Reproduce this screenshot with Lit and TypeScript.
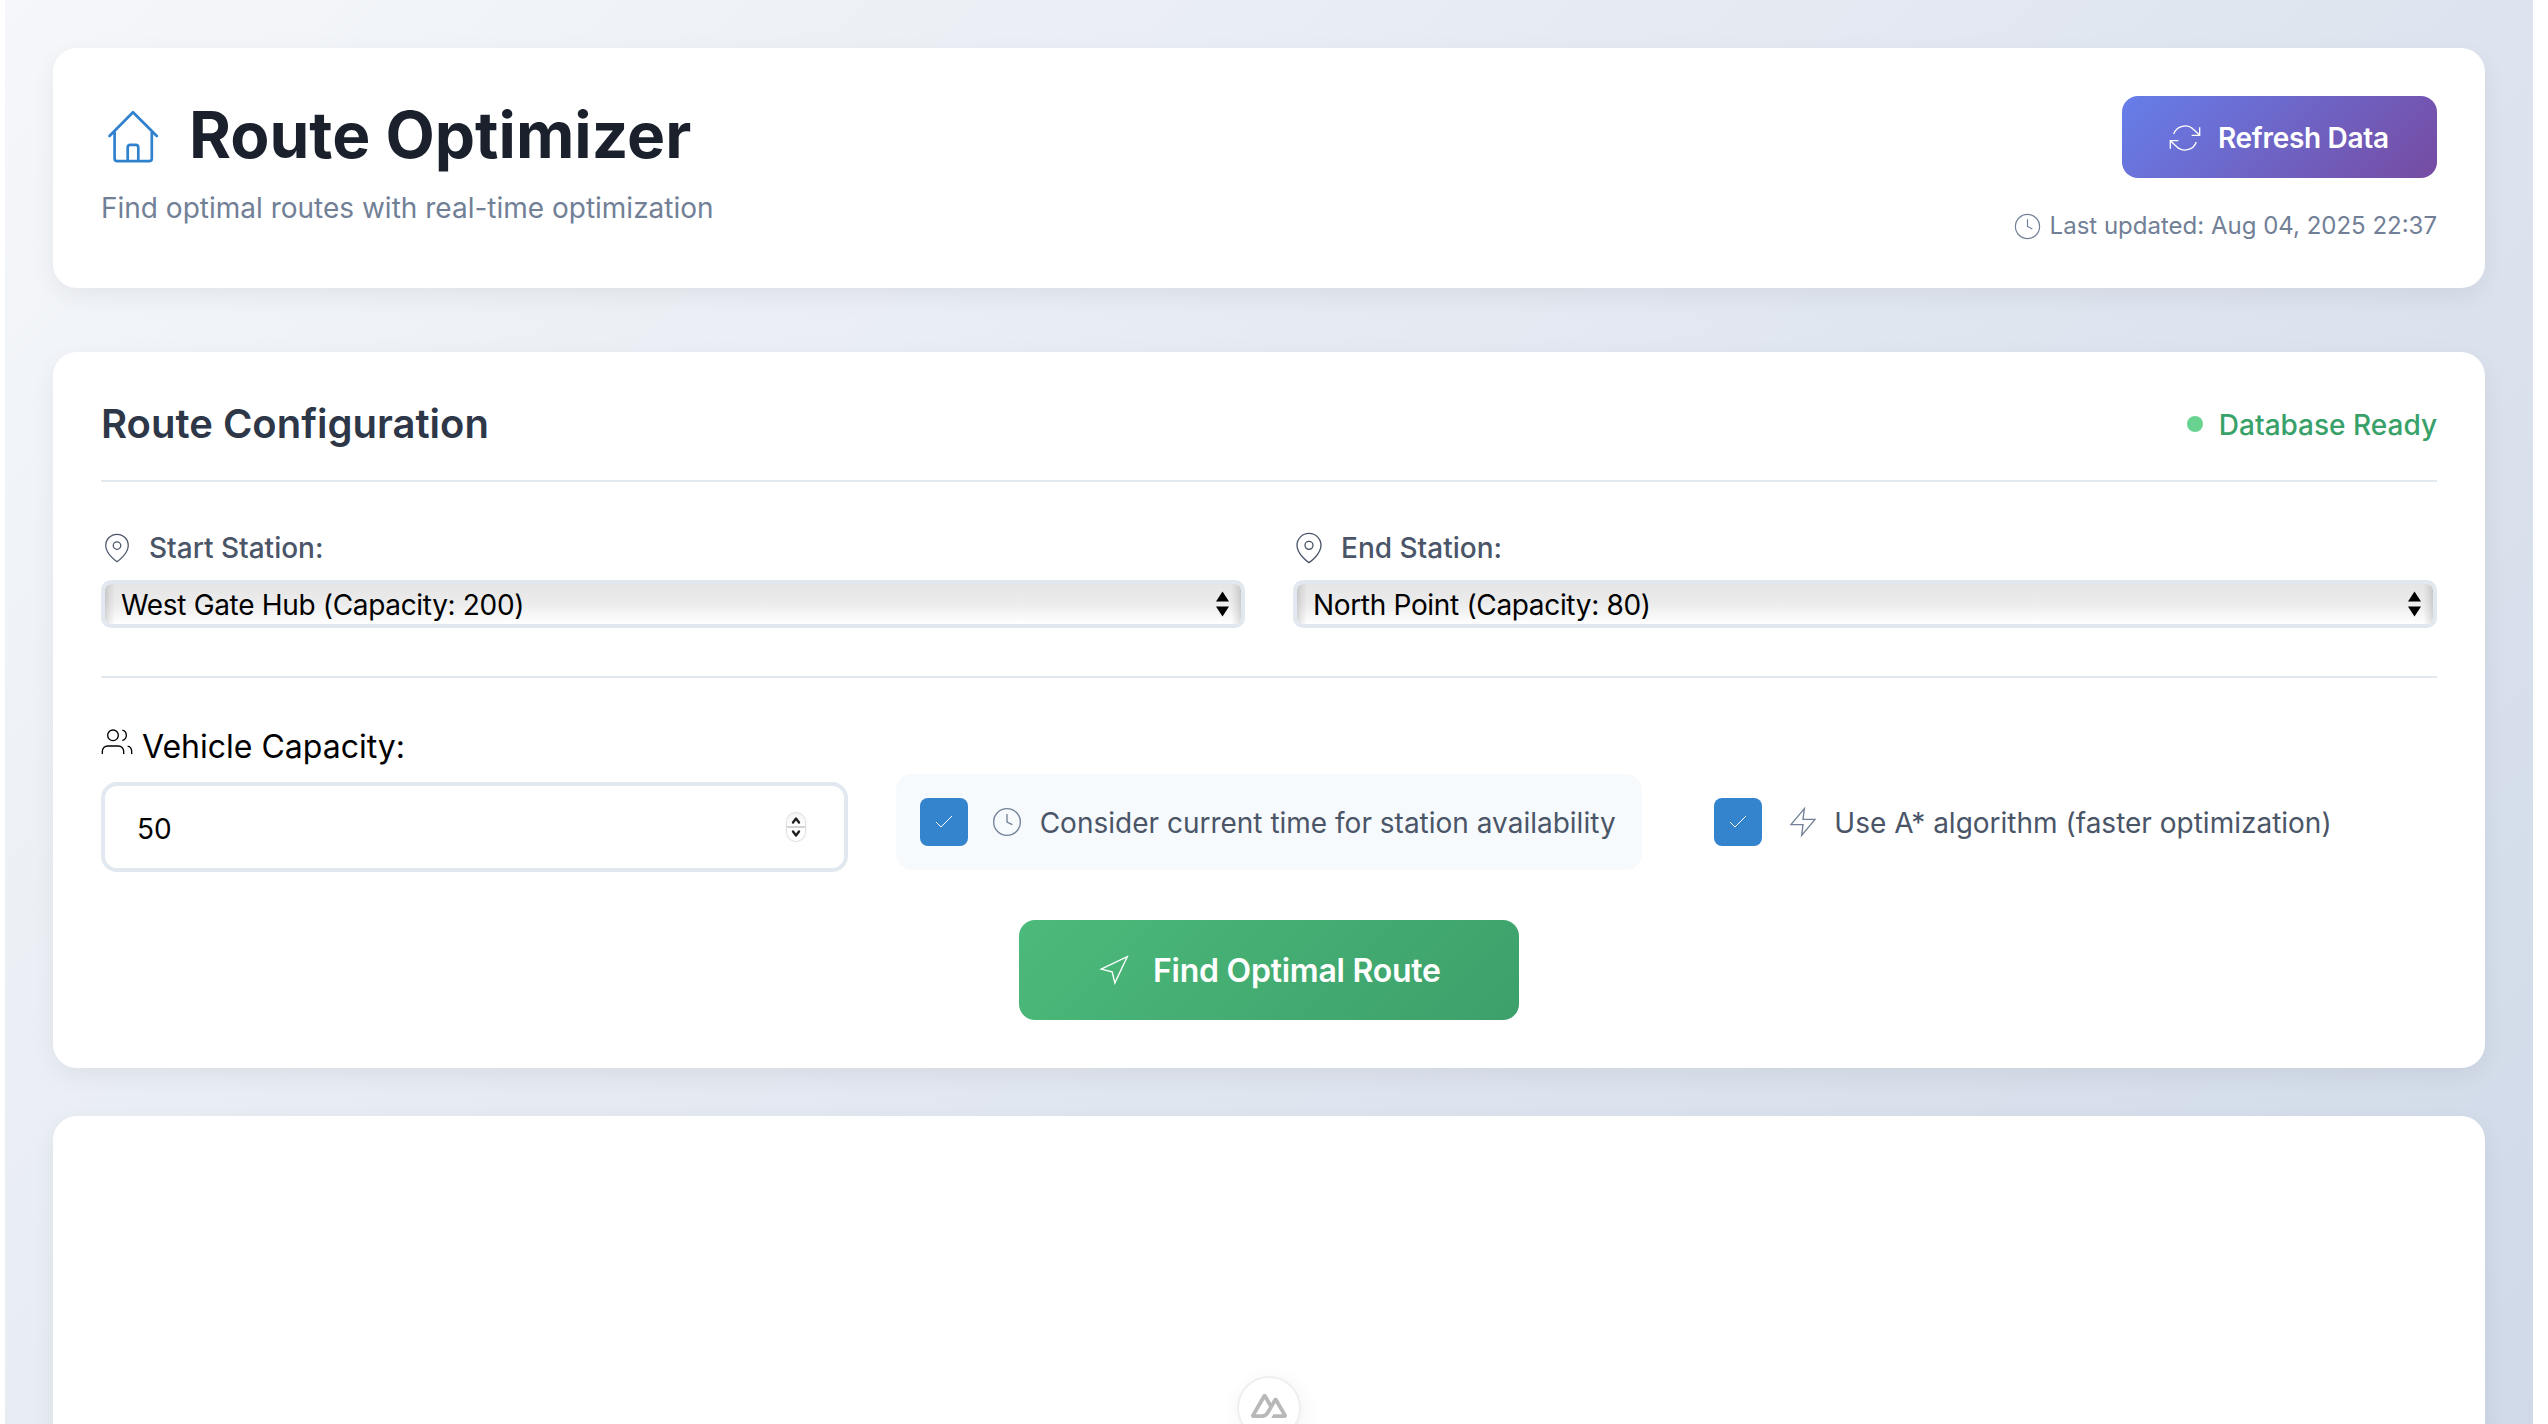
import { LitElement, html, css, svg } from "lit";
import { customElement, property } from "lit/decorators.js";

const ICONS: Record<string, unknown> = {
  clock: svg`<circle cx="12" cy="12" r="10"/><polyline points="12 6 12 12 16 14"/>`,
  refresh: svg`<polyline points="23 4 23 10 17 10"/><polyline points="1 20 1 14 7 14"/><path d="M3.51 9a9 9 0 0 1 14.85-3.36L23 10M1 14l4.64 4.36A9 9 0 0 0 20.49 15"/>`,
  pin: svg`<path d="M21 10c0 7-9 13-9 13s-9-6-9-13a9 9 0 0 1 18 0z"/><circle cx="12" cy="10" r="3"/>`,
  users: svg`<path d="M17 21v-2a4 4 0 0 0-4-4H5a4 4 0 0 0-4 4v2"/><circle cx="9" cy="7" r="4"/><path d="M23 21v-2a4 4 0 0 0-3-3.87"/><path d="M16 3.13a4 4 0 0 1 0 7.75"/>`,
  check: svg`<polyline points="20 6 9 17 4 12"/>`,
  zap: svg`<polygon points="13 2 3 14 12 14 11 22 21 10 12 10 13 2"/>`,
  navigation: svg`<polygon points="3 11 22 2 13 21 11 13 3 11"/>`,
};

@customElement("line-icon")
export class LineIcon extends LitElement {
  @property() name = "clock";

  static styles = css`
    :host { display: block; flex: none; }
    .glyph { display: block; width: 100%; height: 100%; fill: none; stroke: currentColor; stroke-width: 1; overflow: visible; }
  `;

  render() {
    return html`<svg class="glyph" viewBox="0 0 24 24">${ICONS[this.name]}</svg>`;
  }
}

@customElement("station-select")
export class StationSelect extends LitElement {
  @property() label = "";
  @property() value = "";
  @property({ type: Boolean, reflect: true }) compact = false;

  static styles = css`
    :host { display: block; min-width: 0; }
    .label { display: flex; align-items: center; gap: 16px; height: 36px; margin-bottom: 14px; color: #4a5568; font-weight: 500; }
    .pin { width: 32px; height: 32px; }
    :host([compact]) .pin { width: 30px; height: 30px; margin: 0 1px; }
    .select {
      box-sizing: border-box; height: 48px; border: 4px solid #e2e8f0; border-radius: 10px;
      padding: 0 12px 0 16px; display: flex; align-items: center; justify-content: space-between; color: #000;
      letter-spacing: -0.33px;
      background:
        linear-gradient(to right, rgba(0,0,0,.14), rgba(0,0,0,.07) 4px, rgba(0,0,0,0) 10px),
        linear-gradient(to left, rgba(0,0,0,.14), rgba(0,0,0,.07) 4px, rgba(0,0,0,0) 10px),
        linear-gradient(#e5e5e5, #ececec 50%, #fff);
      background-clip: padding-box; background-origin: padding-box;
    }
    .select .text { padding-top: 1px; }
    .arrows { width: 13px; height: 26px; fill: #000; }
  `;

  render() {
    return html`
      <div class="label"><line-icon class="pin" name="pin"></line-icon><span class="text">${this.label}</span></div>
      <div class="select">
        <span class="text">${this.value}</span>
        <svg class="arrows" viewBox="0 0 13 26"><path d="M0 10.5 6.5 .5 13 10.5zM0 15.5 6.5 25.5 13 15.5z"/></svg>
      </div>`;
  }
}

@customElement("option-toggle")
export class OptionToggle extends LitElement {
  @property() icon = "clock";
  @property() label = "";

  static styles = css`
    :host { display: flex; align-items: center; box-sizing: border-box; height: 96px; padding: 0 24px; border-radius: 16px; color: #4a5568; white-space: nowrap; }
    :host([active]) { background: #f7fafc; }
    .box { display: flex; align-items: center; justify-content: center; width: 48px; height: 48px; border-radius: 8px; background: #3483cd; color: #fff; margin-right: 23px; flex: none; }
    .check { width: 24px; height: 24px; }
    .icon { width: 32px; height: 32px; color: #718096; margin-right: 17px; }
    .icon.zap { margin: 0 15px 0 2px; }
    .text { padding-top: 2px; }
  `;

  render() {
    return html`
      <span class="box"><line-icon class="check" name="check"></line-icon></span>
      <line-icon class="icon ${this.icon}" name=${this.icon}></line-icon>
      <span class="text">${this.label}</span>`;
  }
}

@customElement("app-root")
export class AppRoot extends LitElement {
  static styles = css`
    :host { display: block; background: #fff; font-family: Inter, "Liberation Sans", sans-serif; font-size: 28px; line-height: 36px; }
    .page {
      box-sizing: border-box; height: 1424px; overflow: hidden; margin: 0 15px 0 5px; padding: 48px;
      background: linear-gradient(135deg, #f5f7fa 0%, #c3cfe2 100%) 0 0 / 2528px 2800px no-repeat;
      position: relative;
    }
    .card {
      box-sizing: border-box; background: #fff; border-radius: 24px; padding: 48px;
      box-shadow: 0 8px 24px rgba(0,0,0,.06);
    }
    .header { height: 240px; margin-bottom: 64px; display: flex; justify-content: space-between; }
    .brand { display: flex; align-items: center; gap: 24px; height: 77px; margin-bottom: 16px; }
    .house { width: 64px; height: 64px; fill: none; stroke: #3182ce; stroke-width: 2.7; stroke-linecap: round; stroke-linejoin: round; margin-top: 4px; }
    .title { margin: 0; font-size: 64px; line-height: 77px; font-weight: 700; color: #1a202c; }
    .subtitle { margin: 0; line-height: 38px; color: #718096; }
    .side { display: flex; flex-direction: column; align-items: flex-end; gap: 30px; }
    .refresh {
      box-sizing: border-box; flex: none; height: 82px; width: 315px; padding: 0 0 0 47px; border-radius: 16px; display: flex; align-items: center; gap: 17px;
      background: linear-gradient(135deg, #667eea 0%, #764ba2 100%); color: #fff; font-weight: 600; letter-spacing: -0.3px;
    }
    .refresh .text, .find .text { padding-top: 2px; }
    .refresh-icon { width: 32px; height: 32px; margin-top: 2px; }
    .updated { display: flex; flex: none; align-items: center; gap: 8px; height: 36px; font-size: 24px; color: #718096; }
    .updated-icon { width: 29px; height: 29px; }
    .config { height: 716px; margin-bottom: 48px; }
    .config-head { display: flex; align-items: center; justify-content: space-between; height: 48px; padding-bottom: 32px; border-bottom: 2px solid #e2e8f0; }
    .config-title { margin: 0; font-size: 40px; line-height: 48px; font-weight: 600; color: #2d3748; }
    .status { display: flex; align-items: center; gap: 16px; color: #38a169; font-weight: 500; }
    .status .text { padding-top: 2px; }
    .dot { width: 16px; height: 16px; border-radius: 50%; background: #68d391; }
    .stations { display: grid; grid-template-columns: 1fr 1fr; gap: 48px; padding: 48px 0; border-bottom: 2px solid #e2e8f0; }
    .options { display: grid; grid-template-columns: repeat(3, minmax(0, 1fr)); gap: 48px; align-items: end; padding-top: 48px; }
    .toggle { margin-bottom: 2px; }
    .capacity-label { display: flex; align-items: center; gap: 9px; height: 40px; margin-bottom: 16px; font-size: 32px; color: #000; }
    .capacity-label .text { padding-top: 2px; }
    .number .text { padding-top: 3px; }
    .users { width: 32px; height: 32px; margin-top: -9px; }
    .number { box-sizing: border-box; height: 90px; border: 4px solid #e2e8f0; border-radius: 16px; padding: 0 39px 0 32px; display: flex; align-items: center; justify-content: space-between; color: #000; }
    .spinner { width: 18px; height: 28px; border-radius: 9px; background: linear-gradient(#f4f4f4, #fff 45%, #d4d4d4 46%, #d4d4d4 53%, #fff 54%); box-shadow: 0 0 2px rgba(0,0,0,.45); fill: none; stroke: #222; stroke-width: 2.4; stroke-linecap: round; stroke-linejoin: round; }
    .actions { display: flex; justify-content: center; margin-top: 48px; }
    .find { box-sizing: border-box; width: 500px; height: 100px; padding: 0 0 0 78px; border-radius: 16px; display: flex; align-items: center; gap: 23px; background: linear-gradient(135deg, #4cba7a 0%, #3ca06a 100%); color: #fff; font-size: 32px; font-weight: 600; letter-spacing: -0.24px; }
    .find-icon { width: 33px; height: 33px; }
    .results { height: 600px; }
    .badge {
      position: absolute; left: 1232px; top: 1376px; box-sizing: border-box; width: 64px; height: 64px; border: 2px solid #efefef; border-radius: 32px;
      background: #fff; box-shadow: 2px 4px 20px rgba(0,0,0,.06); display: flex; justify-content: center; padding-top: 16px;
    }
    .nuxt { width: 36px; height: 24px; fill: #b8b8b8; }
  `;

  render() {
    return html`
      <main class="page">
        <header class="card header">
          <div>
            <div class="brand">
              <svg class="house" viewBox="0 0 64 64">
                <path d="M8.5 31 32 7.2 55.8 31M13.6 27v26.5a2.6 2.6 0 0 0 2.6 2.6h32a2.6 2.6 0 0 0 2.6-2.6V27M26.7 56V42.4a2.6 2.6 0 0 1 2.6-2.6h5.4a2.6 2.6 0 0 1 2.6 2.6V56"/>
              </svg>
              <h1 class="title">Route Optimizer</h1>
            </div>
            <p class="subtitle">Find optimal routes with real-time optimization</p>
          </div>
          <div class="side">
            <div class="refresh"><line-icon class="refresh-icon" name="refresh"></line-icon><span class="text">Refresh Data</span></div>
            <div class="updated"><line-icon class="updated-icon" name="clock"></line-icon><span class="text">Last updated: Aug 04, 2025 22:37</span></div>
          </div>
        </header>

        <section class="card config">
          <div class="config-head">
            <h2 class="config-title">Route Configuration</h2>
            <div class="status"><i class="dot"></i><span class="text">Database Ready</span></div>
          </div>
          <div class="stations">
            <station-select compact label="Start Station:" value="West Gate Hub (Capacity: 200)"></station-select>
            <station-select label="End Station:" value="North Point (Capacity: 80)"></station-select>
          </div>
          <div class="options">
            <div>
              <div class="capacity-label"><line-icon class="users" name="users"></line-icon><span class="text">Vehicle Capacity:</span></div>
              <div class="number">
                <span class="text">50</span>
                <svg class="spinner" viewBox="0 0 18 28"><path d="M6 9.500 9 5.500l3 4M6 18.500l3 4 3-4"/></svg>
              </div>
            </div>
            <option-toggle class="toggle" active icon="clock" label="Consider current time for station availability"></option-toggle>
            <option-toggle class="toggle" icon="zap" label="Use A* algorithm (faster optimization)"></option-toggle>
          </div>
          <div class="actions">
            <div class="find"><line-icon class="find-icon" name="navigation"></line-icon><span class="text">Find Optimal Route</span></div>
          </div>
        </section>

        <section class="card results"></section>

        <div class="badge">
          <svg class="nuxt" viewBox="0 150 900 600">
            <path d="M504.908 750H839.476C850.103 750.001 860.542 747.229 869.745 741.963C878.948 736.696 886.589 729.121 891.9 719.999C897.211 710.876 900.005 700.529 900 689.997C899.995 679.465 897.193 669.12 891.873 660.002L667.187 274.289C661.876 265.169 654.237 257.595 645.036 252.329C635.835 247.064 625.398 244.291 614.773 244.291C604.149 244.291 593.711 247.064 584.511 252.329C575.31 257.595 567.67 265.169 562.36 274.289L504.908 372.979L392.581 179.993C387.266 170.874 379.623 163.301 370.42 158.036C361.216 152.772 350.777 150 340.151 150C329.525 150 319.086 152.772 309.883 158.036C300.679 163.301 293.036 170.874 287.721 179.993L8.126 660.002C2.807 669.12 0.005 679.465 0 689.997C-0.005 700.529 2.789 710.876 8.1 719.999C13.411 729.121 21.052 736.696 30.255 741.963C39.458 747.229 49.897 750.001 60.524 750H270.538C353.748 750 415.112 713.775 457.336 643.101L559.849 467.145L614.757 372.979L779.547 655.834H559.849L504.908 750ZM267.114 655.737L120.551 655.704L340.249 278.586L449.87 467.145L376.474 593.175C348.433 639.03 316.577 655.737 267.114 655.737Z"/>
          </svg>
        </div>
      </main>`;
  }
}
